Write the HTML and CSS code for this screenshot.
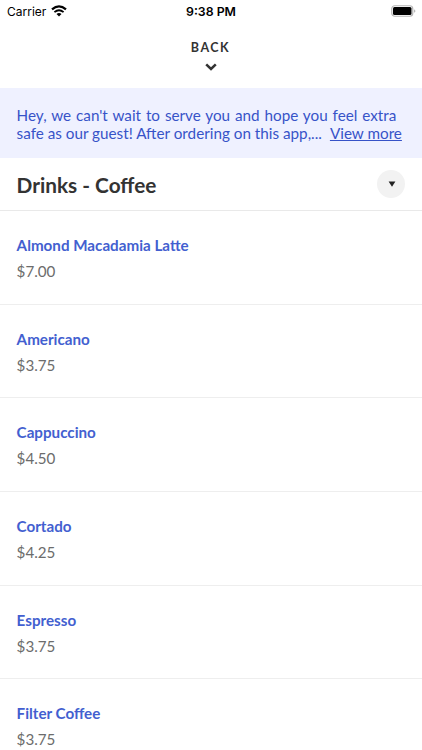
FILE: index.html
```html
<!DOCTYPE html>
<html lang="en">
<head>
    <meta charset="UTF-8">
    <meta name="viewport" content="width=device-width, initial-scale=1.0">
    <title>Drinks - Coffee</title>
    <link rel="stylesheet" href="styles.css">
</head>
<body>
    <div class="status-bar">
        <div class="carrier">
            <span>Carrier</span>
            <svg class="wifi" viewBox="0 0 16 12" width="16" height="12">
                <path d="M1 4.4 Q8 -1.8 15 4.4" fill="none" stroke="#000" stroke-width="2.2"/>
                <path d="M3.4 7.1 Q8 3.2 12.6 7.1" fill="none" stroke="#000" stroke-width="1.9"/>
                <path d="M5.5 8.9 Q8 7 10.5 8.9 L8 11.4 Z" fill="#000"/>
            </svg>
        </div>
        <div class="time">9:38 PM</div>
        <svg class="battery" viewBox="0 0 25 12" width="25" height="12">
            <rect x="0.75" y="0.75" width="21" height="10.5" rx="3" fill="#fff" stroke="#b5b5b5" stroke-width="1.2"/>
            <rect x="2" y="2" width="18.5" height="8" rx="1.5" fill="#000"/>
            <path d="M23.3 4.2 Q25.3 6 23.3 7.8 Z" fill="#999"/>
        </svg>
    </div>

    <div class="back">
        <span>BACK</span>
        <svg class="chevron" viewBox="0 0 12 8" width="12" height="8">
            <path d="M1.2 1.3 L6 6 L10.8 1.3" fill="none" stroke="#333" stroke-width="2.5"/>
        </svg>
    </div>

    <div class="notice">
        <p class="notice-first">Hey, we can't wait to serve you and hope you feel extra</p>
        <p class="notice-second"><span>safe as our guest! After ordering on this app,...</span><a class="view-more">View more</a></p>
    </div>

    <div class="category">
        <h1>Drinks - Coffee</h1>
        <div class="toggle">
            <svg viewBox="0 0 8 6" width="8" height="6">
                <path d="M0.6 0.5 H7.4 L4 5.7 Z" fill="#222"/>
            </svg>
        </div>
    </div>

    <div class="menu">
        <div class="item">
            <h2>Almond Macadamia Latte</h2>
            <p>$7.00</p>
        </div>
        <div class="item">
            <h2>Americano</h2>
            <p>$3.75</p>
        </div>
        <div class="item">
            <h2>Cappuccino</h2>
            <p>$4.50</p>
        </div>
        <div class="item">
            <h2>Cortado</h2>
            <p>$4.25</p>
        </div>
        <div class="item">
            <h2>Espresso</h2>
            <p>$3.75</p>
        </div>
        <div class="item">
            <h2>Filter Coffee</h2>
            <p>$3.75</p>
        </div>
    </div>
</body>
</html>
```

FILE: styles.css
```css
* {
    padding: 0;
    margin: 0;
    box-sizing: border-box;
}

body {
    height: 750px;
    overflow: hidden;
    background-color: #ffffff;
    font-family: Lato, "Liberation Sans", sans-serif;
}

.status-bar {
    display: grid;
    grid-template-columns: 1fr auto 1fr;
    align-items: center;
    height: 22px;
    padding: 0 6px 0 7px;
    font-family: Inter, "Liberation Sans", sans-serif;
    font-size: 12px;
    color: #000000;
}

.carrier {
    display: flex;
    align-items: center;
    gap: 5px;
}

.time {
    font-size: 12.3px;
    font-weight: 600;
    padding-right: 1px;
}

.battery {
    justify-self: end;
}

.back {
    display: flex;
    flex-direction: column;
    align-items: center;
    height: 66px;
    padding: 18px 1px 0 0;
    font-size: 12.5px;
    line-height: 15px;
    font-weight: bold;
    letter-spacing: 1.5px;
    color: #333333;
}

.chevron {
    margin-top: 8px;
}

.notice {
    height: 70px;
    padding: 18px 17px 0 16.6px;
    background-color: #eff1ff;
    color: #3753c8;
    font-size: 15.25px;
    line-height: 18px;
    white-space: nowrap;
}

.notice-first {
    word-spacing: 1px;
}

.notice-second {
    display: flex;
    gap: 8px;
}

.view-more {
    text-decoration: underline;
}

.category {
    display: flex;
    justify-content: space-between;
    align-items: center;
    height: 53px;
    padding: 0 17px 0 16.6px;
    border-bottom: 1px solid #e9e9e9;
}

.category h1 {
    padding-top: 1px;
    font-size: 20.8px;
    line-height: 26px;
    color: #333333;
}

.toggle {
    display: flex;
    justify-content: center;
    align-items: center;
    width: 28px;
    height: 28px;
    border-radius: 50%;
    background-color: #f2f2f2;
}

.toggle svg {
    margin-left: 1px;
}

.item {
    height: 93.7px;
    padding: 24px 17px 0 16.6px;
    border-bottom: 1px solid #eeeeee;
}

.item h2 {
    font-size: 15.2px;
    line-height: 20px;
    color: #435fd0;
}

.item p {
    margin-top: 6px;
    font-size: 15.2px;
    line-height: 20px;
    color: #6c6c6c;
}
```
